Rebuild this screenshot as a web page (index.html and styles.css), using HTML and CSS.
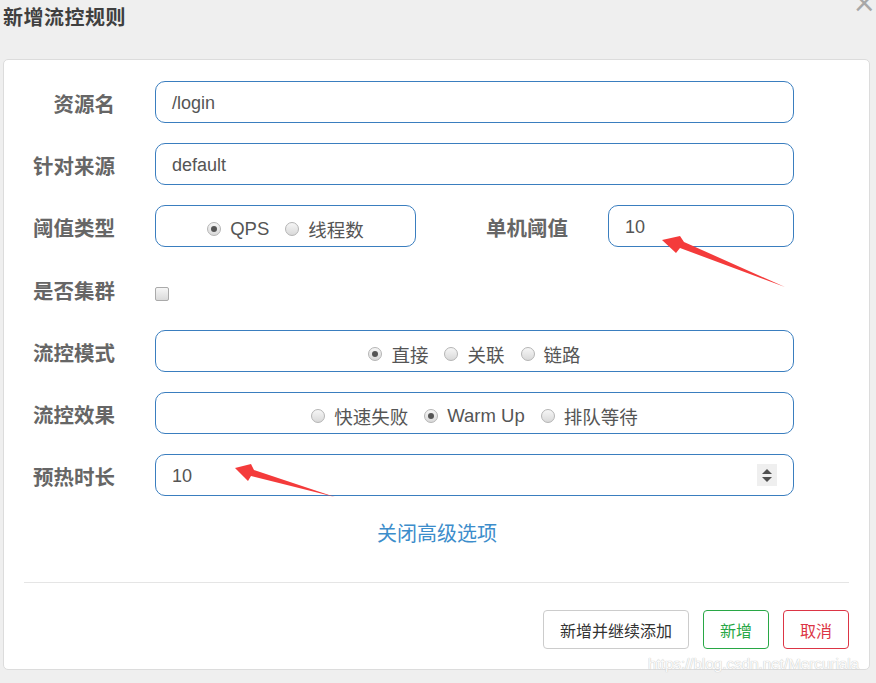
FILE: index.html
```html
<!DOCTYPE html>
<html lang="zh">
<head>
<meta charset="utf-8">
<title>新增流控规则</title>
<link rel="stylesheet" href="styles.css">
</head>
<body>
<div class="page">
  <div class="head">
    <h1 class="title">新增流控规则</h1>
    <span class="close">×</span>
  </div>
  <div class="card">
    <div class="form">
      <label class="lbl">资源名</label>
      <div class="box"><span class="val">/login</span></div>

      <label class="lbl">针对来源</label>
      <div class="box"><span class="val">default</span></div>

      <label class="lbl">阈值类型</label>
      <div class="split">
        <div class="box box-radio narrow">
          <span class="opt"><i class="radio on"></i><span class="latin">QPS</span></span>
          <span class="opt"><i class="radio"></i>线程数</span>
        </div>
        <label class="lbl lbl-mid">单机阈值</label>
        <div class="box small"><span class="val">10</span></div>
      </div>

      <label class="lbl">是否集群</label>
      <div class="check-row"><i class="check"></i></div>

      <label class="lbl">流控模式</label>
      <div class="box box-radio">
        <span class="opt"><i class="radio on"></i>直接</span>
        <span class="opt"><i class="radio"></i>关联</span>
        <span class="opt"><i class="radio"></i>链路</span>
      </div>

      <label class="lbl">流控效果</label>
      <div class="box box-radio">
        <span class="opt"><i class="radio"></i>快速失败</span>
        <span class="opt"><i class="radio on"></i><span class="latin">Warm Up</span></span>
        <span class="opt"><i class="radio"></i>排队等待</span>
      </div>

      <label class="lbl">预热时长</label>
      <div class="box box-num">
        <span class="val">10</span>
        <span class="spin"><i class="up"></i><i class="down"></i></span>
      </div>
    </div>

    <div class="link-row"><a class="link">关闭高级选项</a></div>

    <div class="divider"></div>

    <div class="actions">
      <button class="btn btn-default">新增并继续添加</button>
      <button class="btn btn-ok">新增</button>
      <button class="btn btn-cancel">取消</button>
    </div>
  </div>

  <svg class="arrows" width="876" height="683" viewBox="0 0 876 683">
    <polygon points="662,240 680,236 684,242 785,287 680,248 676,253" fill="#f43b3b"/>
    <polygon points="235,468 251,464 254,470 335,497 251,476 248,481" fill="#f43b3b"/>
  </svg>
  <div class="watermark">https://blog.csdn.net/Mercuriala</div>
</div>
</body>
</html>
```
FILE: styles.css
```css
* { box-sizing: border-box; }
html, body { margin: 0; padding: 0; }
body {
  background: #efefef;
  font-family: "Liberation Sans", "Noto Sans CJK SC", sans-serif;
  color: #555;
}
.page {
  position: relative;
  width: 876px;
  height: 683px;
  overflow: hidden;
}
.head {
  height: 59px;
  padding: 6px 0 0 3px;
}
.title {
  margin: 0;
  font-size: 20px;
  line-height: 24px;
  font-weight: bold;
  color: #3f3f3f;
  letter-spacing: 0.5px;
}
.close {
  position: absolute;
  right: 0;
  top: -11px;
  font-size: 28px;
  line-height: 28px;
  color: #a8a8a8;
  font-family: "DejaVu Sans", sans-serif;
}
.card {
  margin-left: 3px;
  width: 867px;
  background: #fff;
  border: 1px solid #dcdcdc;
  border-radius: 5px;
  padding: 21px 19px 20px 20px;
}
.form {
  display: grid;
  grid-template-columns: 91px 639px;
  column-gap: 40px;
  row-gap: 20.2px;
}
.lbl {
  font-size: 20.5px;
  font-weight: bold;
  color: #666;
  text-align: right;
  line-height: 42px;
  height: 42px;
  white-space: nowrap;
  padding-top: 3px;
}
.box {
  height: 42px;
  border: 1px solid #3a7ebf;
  border-radius: 10px;
  display: flex;
  align-items: center;
  padding: 0 16px;
  font-size: 18px;
  color: #555;
}
.val { line-height: 20px; padding-top: 1px; }
.split {
  display: flex;
  align-items: center;
}
.narrow { width: 261px; }
.lbl-mid {
  flex: 1;
  padding-right: 40px;
}
.small { width: 186px; }
.box-radio {
  justify-content: center;
  gap: 16px;
  padding-top: 6px;
  font-family: "Noto Sans CJK SC", "Liberation Sans", sans-serif;
}
.opt {
  display: inline-flex;
  align-items: center;
  gap: 9px;
  font-size: 18.5px;
  color: #555;
}
.latin { font-family: "Liberation Sans", sans-serif; }
.radio {
  width: 14px;
  height: 14px;
  border-radius: 50%;
  border: 1px solid #b4b4b4;
  background: linear-gradient(#f6f6f6, #d9d9d9);
  position: relative;
  display: inline-block;
  flex: none;
}
.radio.on::after {
  content: "";
  position: absolute;
  left: 3px;
  top: 3px;
  width: 6px;
  height: 6px;
  border-radius: 50%;
  background: #555;
}
.check-row {
  height: 42px;
  display: flex;
  align-items: center;
  padding-top: 10px;
}
.check {
  width: 14px;
  height: 14px;
  border: 1px solid #aaa;
  border-radius: 2px;
  background: linear-gradient(#f6f6f6, #dadada);
  display: inline-block;
}
.box-num { justify-content: space-between; padding-right: 16px; }
.spin {
  width: 20px;
  height: 22px;
  background: #efefef;
  display: flex;
  flex-direction: column;
  align-items: center;
  justify-content: center;
  gap: 3px;
}
.spin .up {
  width: 0; height: 0;
  border-left: 5px solid transparent;
  border-right: 5px solid transparent;
  border-bottom: 5px solid #505050;
}
.spin .down {
  width: 0; height: 0;
  border-left: 5px solid transparent;
  border-right: 5px solid transparent;
  border-top: 5px solid #505050;
}
.link-row {
  text-align: center;
  margin-top: 22px;
  height: 30px;
}
.link {
  font-family: "Noto Sans CJK SC", sans-serif;
  font-size: 20px;
  line-height: 30px;
  color: #3c8dcb;
  text-decoration: none;
}
.divider {
  margin-top: 34px;
  border-top: 1px solid #e5e5e5;
  margin-right: 1px;
}
.actions {
  display: flex;
  justify-content: flex-end;
  gap: 14px;
  margin-top: 27px;
  padding-right: 1px;
}
.btn {
  height: 39px;
  padding: 0 16px;
  background: #fff;
  border-radius: 4px;
  font-family: "Noto Sans CJK SC", sans-serif;
  font-size: 16px;
  border: 1px solid #ccc;
  color: #333;
}
.btn-ok { border-color: #28a745; color: #28a745; }
.btn-cancel { border-color: #dc3545; color: #dc3545; }
.arrows {
  position: absolute;
  left: 0;
  top: 0;
  pointer-events: none;
}
.watermark {
  position: absolute;
  left: 648px;
  top: 655px;
  font-size: 15.2px;
  color: #fbfbfb;
  text-shadow: 0 0 1px #c4c4c4, 0 0 1px #d0d0d0;
  white-space: nowrap;
}
```
